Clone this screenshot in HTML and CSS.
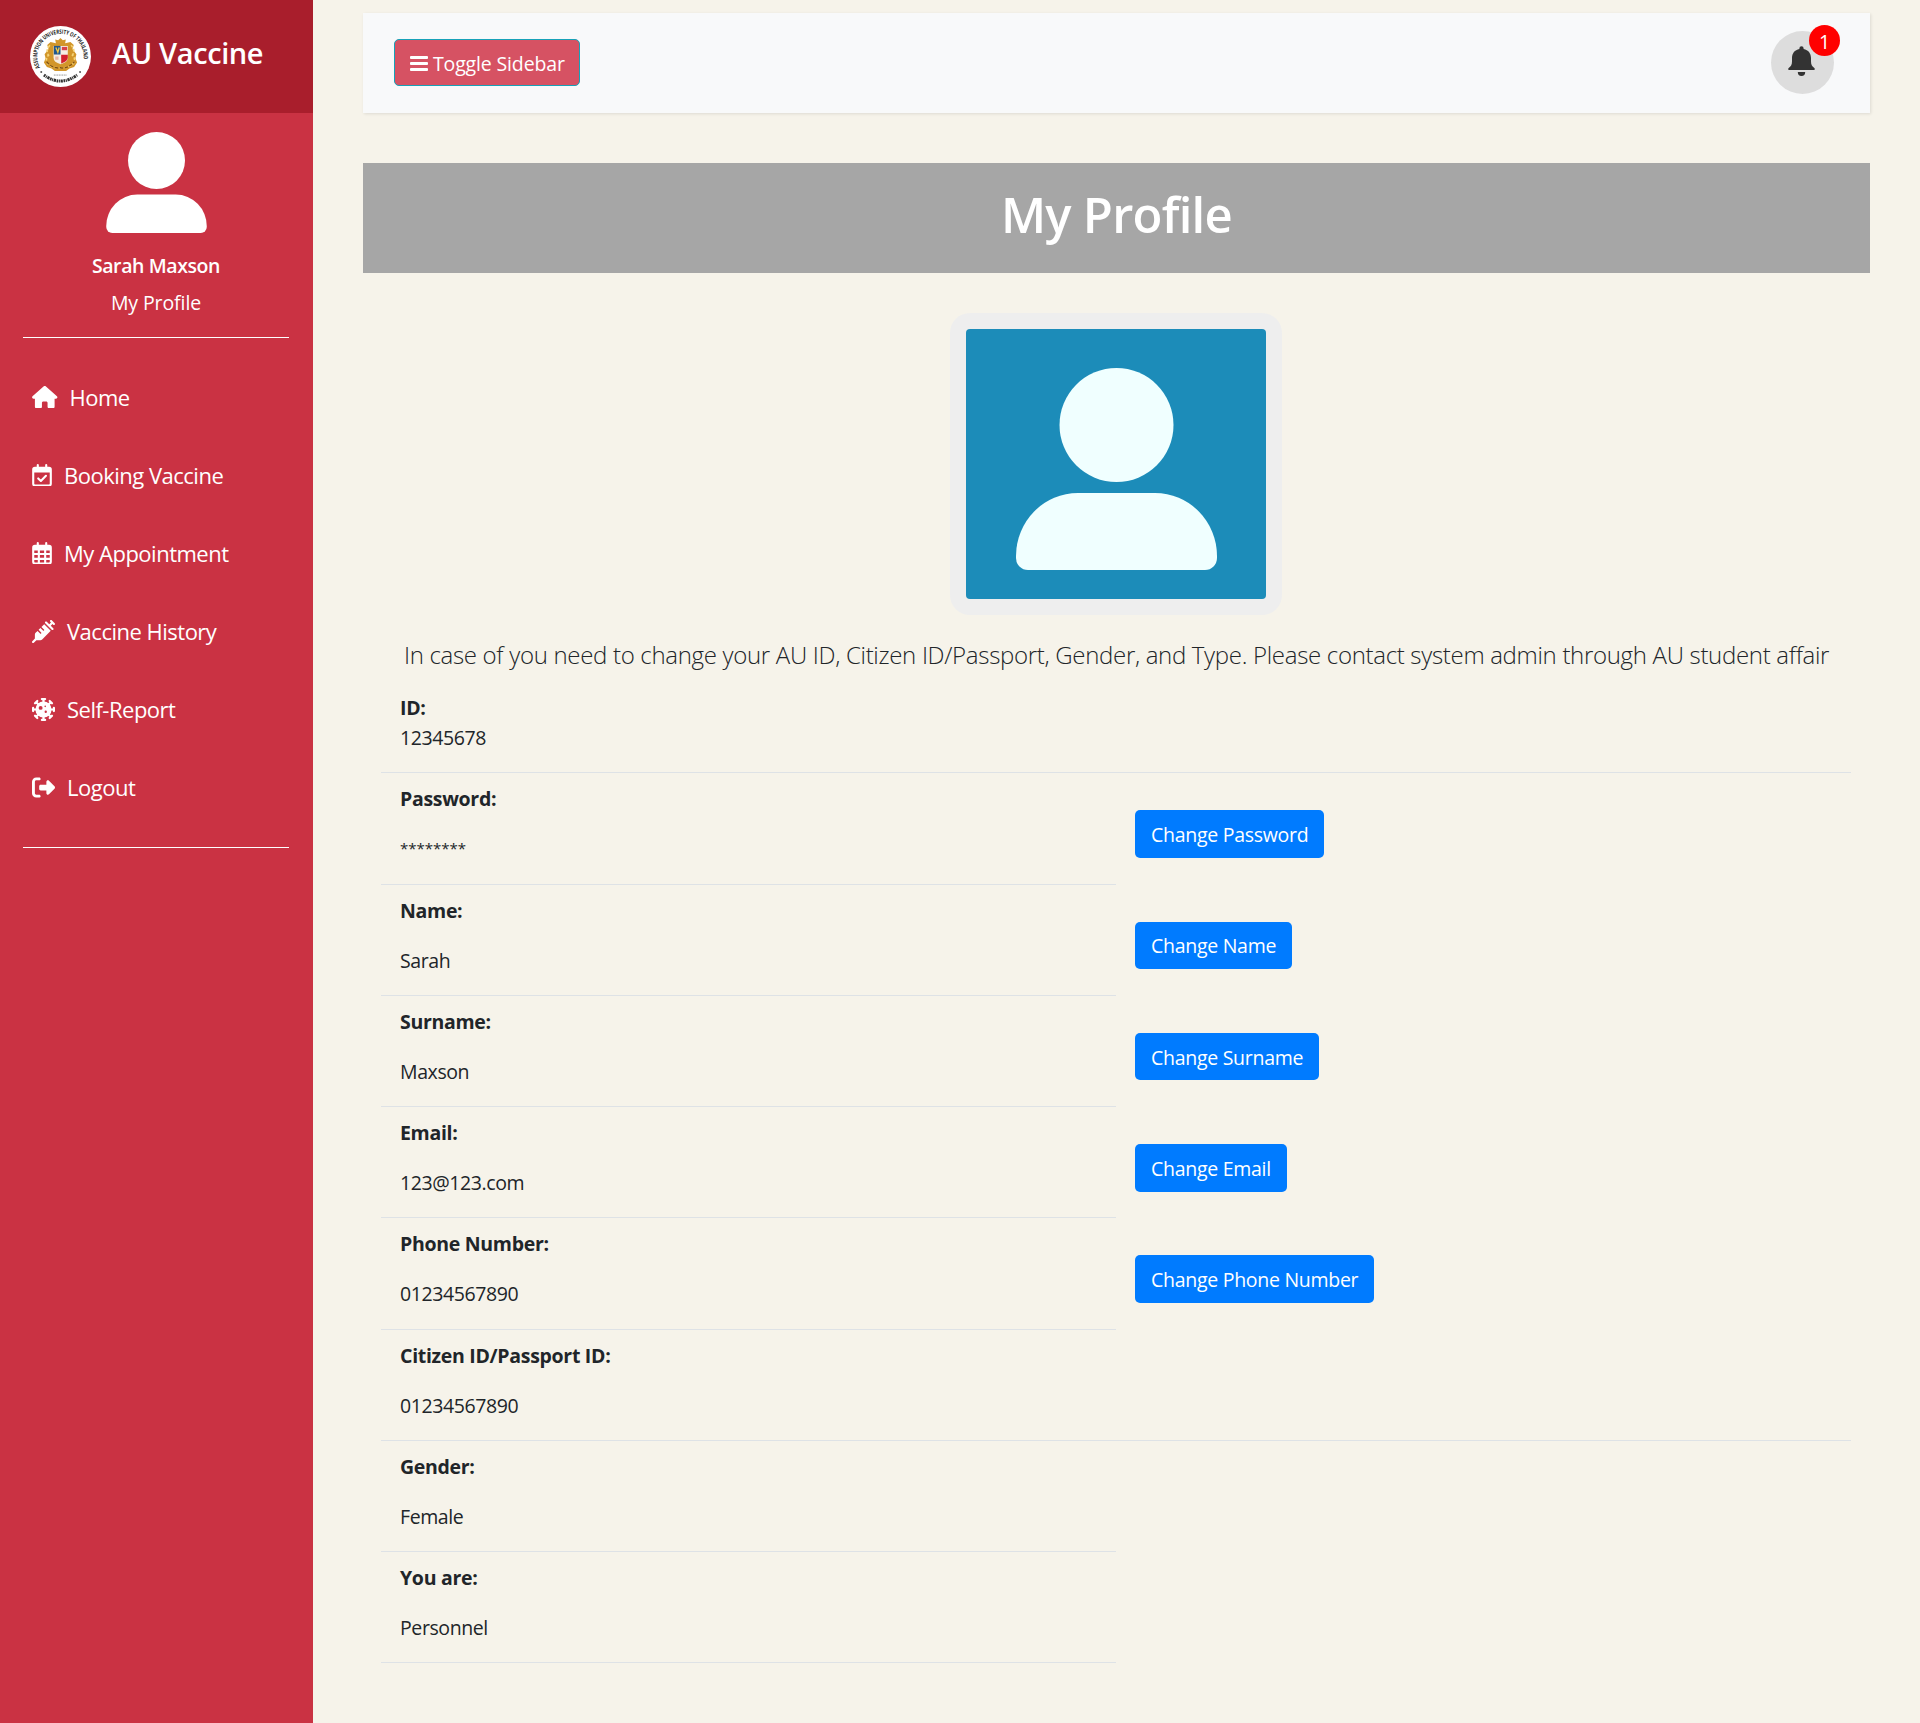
FILE: index.html
```html
<!DOCTYPE html>
<html lang="en">
<head>
<meta charset="utf-8">
<title>AU Vaccine - My Profile</title>
<link rel="stylesheet" href="styles.css">
</head>
<body>
<svg class="defs" aria-hidden="true">
  <symbol id="person" viewBox="0 0 201 202">
    <circle cx="100.5" cy="57" r="57"/>
    <path d="M62 125H139A62 63 0 0 1 201 188V190A12 12 0 0 1 189 202H12A12 12 0 0 1 0 190V188A62 63 0 0 1 62 125Z"/>
  </symbol>
</svg>
<div class="layout">
  <aside class="sidebar">
    <header class="brand">
      <svg class="brand-logo" viewBox="0 0 184 184">
        <circle cx="92" cy="92" r="92" fill="#fff"/>
        <path id="ring" d="M30 126A70 70 0 1 1 154 126" fill="none"/>
        <text class="ring-text"><textPath href="#ring" textLength="260" lengthAdjust="spacingAndGlyphs">ASSUMPTION UNIVERSITY OF THAILAND</textPath></text>
        <path d="M42 148Q92 184 142 148" fill="none" stroke="#333" stroke-width="9" stroke-dasharray="5 2 3 2 7 2"/>
        <circle cx="34" cy="139" r="3" fill="#555"/><circle cx="151" cy="139" r="3" fill="#555"/>
        <path d="M72 148h40" stroke="#888" stroke-width="3" stroke-dasharray="3 2"/>
        <path d="M92 36l7 7 9-2-2 11 16-4 10 9-4 12 12 16-3 12 5 13-9 14-14 4-10 8H75l-10-8-14-4-9-14 5-13-3-12 12-16-4-12 10-9 16 4-2-11 9 2z" fill="#d2962a"/>
        <path d="M60 58q-14 15-4 30-12 12-2 26 14 14 38 12 24 2 38-12 10-14-2-26 10-15-4-30" fill="none" stroke="#f5d477" stroke-width="5" stroke-dasharray="9 5"/>
        <path d="M50 108q20 22 42 18 22 4 42-18" fill="none" stroke="#80500f" stroke-width="4" stroke-dasharray="10 5"/>
        <path d="M71 60h43v35q0 15-21.500 20Q71 110 71 95z" fill="#f5eee4"/>
        <path d="M72 60h20v26H72z" fill="#20578f"/>
        <path d="M78 65l6 14 4-14" fill="none" stroke="#f0c84a" stroke-width="4"/>
        <path d="M94 87h20v8q0 12-20 18z" fill="#d3202f"/>
        <path d="M96 63h16v10H96z" fill="#d9434a"/>
        <path d="M76 92h10v10H76z" fill="#e8b6a6"/>
      </svg>
      <span class="brand-name">AU Vaccine</span>
    </header>
    <section class="account">
      <svg class="account-icon"><use href="#person"/></svg>
      <strong class="account-name">Sarah Maxson</strong>
      <a class="account-link">My Profile</a>
    </section>
    <nav class="menu">
      <a class="menu-item"><svg class="icon w-home" viewBox="0 0 576 512"><path d="M575.8 255.5c0 18-15 32.1-32 32.1h-32l.7 160.2c0 2.700-.2 5.400-.5 8.100V472c0 22.100-17.900 40-40 40H392c-22.100 0-40-17.900-40-40V384c0-17.700-14.300-32-32-32H256c-17.700 0-32 14.300-32 32v88c0 22.100-17.900 40-40 40H104c-22.100 0-40-17.900-40-40V287.600H32c-18 0-32-14-32-32.100c0-9 3-17 10-24L266.400 8c7-7 15-8 22-8s15 2 21 7L564.800 231.500c8 7 12 15 11 24z"/></svg>Home</a>
      <a class="menu-item"><svg class="icon w-cal" viewBox="0 0 448 512"><path fill-rule="evenodd" d="M104 24a24 24 0 0 1 48 0V64H296V24a24 24 0 0 1 48 0V64h40a64 64 0 0 1 64 64V448a64 64 0 0 1-64 64H64a64 64 0 0 1-64-64V128A64 64 0 0 1 64 64h40ZM48 192V448a16 16 0 0 0 16 16H384a16 16 0 0 0 16-16V192Z"/><path d="M138 328l60 58L314 268" fill="none" stroke="#fff" stroke-width="48" stroke-linecap="round" stroke-linejoin="round"/></svg>Booking Vaccine</a>
      <a class="menu-item"><svg class="icon w-cal" viewBox="0 0 448 512"><path fill-rule="evenodd" d="M104 24a24 24 0 0 1 48 0V64H296V24a24 24 0 0 1 48 0V64h40a64 64 0 0 1 64 64V448a64 64 0 0 1-64 64H64a64 64 0 0 1-64-64V128A64 64 0 0 1 64 64h40ZM48 192v56h80v-56ZM176 192v56h96v-56ZM320 192v56h80v-56ZM48 296v64h80v-64ZM176 296v64h96v-64ZM320 296v64h80v-64ZM48 408v40a16 16 0 0 0 16 16h64v-56ZM176 408v56h96v-56ZM320 408v56h64a16 16 0 0 0 16-16v-40Z"/></svg>My Appointment</a>
      <a class="menu-item"><svg class="icon w-sq" viewBox="0 0 512 512"><path d="M441 7l32 32 32 32c9.400 9.400 9.400 24.600 0 33.900s-24.600 9.400-33.900 0l-15-15L417.900 128l55 55c9.400 9.400 9.400 24.600 0 33.900s-24.600 9.400-33.900 0l-72-72L295 73c-9.400-9.400-9.400-24.600 0-33.900s24.600-9.400 33.900 0l55 55L422.100 56 407 41c-9.400-9.400-9.400-24.600 0-33.900s24.600-9.400 33.900 0zM210.300 155.700l61.100-61.100c.3.3.6.7 1 1l16 16 56 56 56 56 16 16c.3.3.6.6 1 1l-191 191c-10.500 10.500-24.700 16.400-39.600 16.400H97.900L41 505c-9.400 9.400-24.600 9.400-33.900 0s-9.400-24.600 0-33.900l57-57V325.300c0-14.900 5.900-29.100 16.400-39.600l43.300-43.300 57 57c6.200 6.200 16.400 6.200 22.600 0s6.200-16.400 0-22.600l-57-57 41.400-41.400 57 57c6.200 6.200 16.400 6.200 22.600 0s6.200-16.400 0-22.600l-57-57z"/></svg>Vaccine History</a>
      <a class="menu-item"><svg class="icon w-sq" viewBox="0 0 512 512"><path fill-rule="evenodd" d="M256 76a180 180 0 1 0 0 360a180 180 0 1 0 0-360ZM192 176a44 44 0 1 1 0 88a44 44 0 1 1 0-88ZM306 280a26 26 0 1 1 0 52a26 26 0 1 1 0-52ZM294 168a18 18 0 1 1 0 36a18 18 0 1 1 0-36Z"/><g fill="none" stroke="#fff" stroke-width="50" stroke-linecap="round"><path id="spike" d="M256 90V26M220 25h72"/><use href="#spike" transform="rotate(45 256 256)"/><use href="#spike" transform="rotate(90 256 256)"/><use href="#spike" transform="rotate(135 256 256)"/><use href="#spike" transform="rotate(180 256 256)"/><use href="#spike" transform="rotate(225 256 256)"/><use href="#spike" transform="rotate(270 256 256)"/><use href="#spike" transform="rotate(315 256 256)"/></g></svg>Self-Report</a>
      <a class="menu-item"><svg class="icon w-sq" viewBox="0 0 512 512"><path d="M500.700 228.700L377.900 105.900c-6.400-6.400-15-9.900-24-9.900c-18.700 0-33.900 15.200-33.900 33.900V192H192c-17.700 0-32 14.300-32 32v64c0 17.700 14.300 32 32 32H320v62.100c0 18.700 15.200 33.900 33.900 33.900c9 0 17.600-3.600 24-9.900L500.700 283.300c7.200-7.200 11.300-17.100 11.300-27.300s-4.100-20.100-11.300-27.300zM160 96c17.700 0 32-14.300 32-32s-14.300-32-32-32H96C43 32 0 75 0 128V384c0 53 43 96 96 96h64c17.700 0 32-14.300 32-32s-14.300-32-32-32H96c-17.700 0-32-14.300-32-32V128c0-17.700 14.300-32 32-32h64z"/></svg>Logout</a>
    </nav>
  </aside>
  <main class="content">
    <div class="topbar">
      <button class="toggle"><svg class="toggle-icon" viewBox="0 0 18 16"><path d="M1 1.500H17M1 7.500H17M1 13.500H17" stroke="#fff" stroke-width="2.800" stroke-linecap="round"/></svg>Toggle Sidebar</button>
      <div class="bell">
        <svg class="bell-icon" viewBox="0 0 27 30"><path d="M11.400 2.300a2.100 2.100 0 0 1 4.200 0v.6C20.300 3.800 23 7.300 23 12v3.500c0 3.500 1.200 4.800 3.300 6.600.9.800.5 2-.6 2H1.300c-1.100 0-1.500-1.200-.6-2C2.800 20.300 4 19 4 15.500V12C4 7.300 6.700 3.800 11.400 2.900zM9.800 26h7.400a3.700 3.900 0 0 1-7.400 0z"/></svg>
        <span class="badge">1</span>
      </div>
    </div>
    <h1 class="banner">My Profile</h1>
    <div class="portrait"><div class="portrait-inner"><svg class="portrait-icon"><use href="#person"/></svg></div></div>
    <p class="notice">In case of you need to change your AU ID, Citizen ID/Passport, Gender, and Type. Please contact system admin through AU student affair</p>
    <div class="fields">
      <div class="row row-id"><div class="field wide"><b>ID:</b><span>12345678</span></div></div>
      <div class="row"><div class="field"><b>Password:</b><span class="masked">********</span></div><div class="action"><button class="change">Change Password</button></div></div>
      <div class="row"><div class="field"><b>Name:</b><span>Sarah</span></div><div class="action"><button class="change">Change Name</button></div></div>
      <div class="row"><div class="field"><b>Surname:</b><span>Maxson</span></div><div class="action"><button class="change">Change Surname</button></div></div>
      <div class="row"><div class="field"><b>Email:</b><span>123@123.com</span></div><div class="action"><button class="change">Change Email</button></div></div>
      <div class="row"><div class="field"><b>Phone Number:</b><span>01234567890</span></div><div class="action"><button class="change">Change Phone Number</button></div></div>
      <div class="row"><div class="field wide"><b>Citizen ID/Passport ID:</b><span>01234567890</span></div></div>
      <div class="row"><div class="field"><b>Gender:</b><span>Female</span></div></div>
      <div class="row"><div class="field"><b>You are:</b><span>Personnel</span></div></div>
    </div>
  </main>
</div>
</body>
</html>
```
FILE: styles.css
```css
* { box-sizing: border-box; }
body {
  margin: 0;
  background: #f6f3ea;
  color: #212529;
  font: 400 19.5px/30px "Open Sans", "Noto Sans", sans-serif;
}
button { font: inherit; color: #fff; }
.defs { display: block; width: 0; height: 0; }
.layout { display: flex; min-height: 1723px; }

.sidebar { width: 313px; flex: none; background: #ca3243; color: #fff; }
.brand {
  display: flex;
  align-items: flex-start;
  gap: 21px;
  height: 113px;
  padding: 26px 0 0 30px;
  background: #a91e2c;
}
.brand-logo { width: 61px; height: 61px; }
.ring-text { font: 700 18px "Open Sans", sans-serif; fill: #222; }
.brand-name { margin-top: 7px; font-size: 29px; line-height: 40px; font-weight: 600; letter-spacing: -0.4px; }

.account {
  display: flex;
  flex-direction: column;
  align-items: center;
  height: 225px;
  margin: 0 24px 0 23px;
  padding-top: 19px;
  border-bottom: 1px solid #fff;
}
.account-icon { width: 101px; height: 101px; fill: #fff; }
.account-name { margin-top: 18px; font-weight: 600; letter-spacing: -0.4px; }
.account-link { margin-top: 7px; letter-spacing: -0.1px; }

.menu {
  height: 510px;
  margin: 0 24px 0 23px;
  padding: 20px 0 0 9px;
  border-bottom: 1px solid #fff;
}
.menu-item {
  display: flex;
  align-items: center;
  gap: 12px;
  height: 78px;
  font-size: 22px;
  letter-spacing: -0.5px;
}
.icon { height: 22.500px; fill: #fff; flex: none; }
.w-home { width: 25.500px; }
.w-cal { width: 20px; }
.w-sq { width: 23px; height: 23px; }

.content { width: 1507px; margin: 13px 0 0 50px; }
.topbar {
  display: flex;
  align-items: center;
  justify-content: space-between;
  height: 100px;
  padding: 0 36px 2px 31px;
  background: #f8f9fa;
  box-shadow: 1px 1px 3px rgba(0, 0, 0, .1);
}
.toggle {
  display: flex;
  align-items: center;
  gap: 5px;
  width: 186px;
  height: 47px;
  padding: 3px 0 0 15px;
  background: #d65263;
  border: 1px solid #17a2b8;
  border-radius: 5px;
  letter-spacing: -0.15px;
  white-space: nowrap;
}
.toggle-icon { width: 18px; height: 16px; flex: none; }
.bell {
  position: relative;
  display: flex;
  align-items: center;
  justify-content: center;
  width: 63px;
  height: 63px;
  border-radius: 50%;
  background: #ddd;
}
.bell-icon { width: 27px; height: 30px; margin: 0 2px 2px 0; fill: #333; }
.badge {
  position: absolute;
  top: -6px;
  right: -6px;
  width: 31px;
  height: 31px;
  border-radius: 50%;
  background: #f00;
  color: #fff;
  text-align: center;
  line-height: 33px;
}

.banner {
  height: 110px;
  margin: 50px 0 40px;
  padding-top: 21px;
  background: #a6a6a6;
  color: #fff;
  font-size: 49px;
  line-height: 60px;
  font-weight: 600;
  letter-spacing: -0.75px;
  text-align: center;
}
.portrait {
  width: 332px;
  height: 302px;
  margin: 0 0 0 587px;
  padding: 16px;
  border-radius: 20px;
  background: #eee;
}
.portrait-inner {
  height: 270px;
  padding: 39px 0 0 50px;
  border-radius: 4px;
  background: #1c8cb9;
}
.portrait-icon { display: block; width: 201px; height: 202px; fill: #f0ffff; }
.notice {
  margin: 22px 0 0;
  font-size: 24px;
  line-height: 36px;
  font-weight: 300;
  letter-spacing: -0.31px;
  text-align: center;
  white-space: nowrap;
}

.fields { width: 1470px; margin: 7px 0 0 18px; }
.row { display: grid; grid-template-columns: 735px 735px; height: 111.250px; }
.row-id { height: 93.400px; }
.field {
  display: flex;
  flex-direction: column;
  gap: 20px;
  padding: 11px 0 0 19px;
  border-bottom: 1px solid #dee2e6;
  letter-spacing: -0.4px;
}
.row-id .field { gap: 0; padding-top: 13px; }
.field b { letter-spacing: -0.3px; }
.wide { grid-column: 1 / 3; }
.masked { font-size: 15px; letter-spacing: 0; line-height: 28px; }
.action { padding: 36.900px 0 0 19px; }
.change {
  display: block;
  height: 47.500px;
  padding: 2px 16px 0;
  border: 0;
  border-radius: 5px;
  background: #007bff;
  letter-spacing: -0.28px;
}
```
